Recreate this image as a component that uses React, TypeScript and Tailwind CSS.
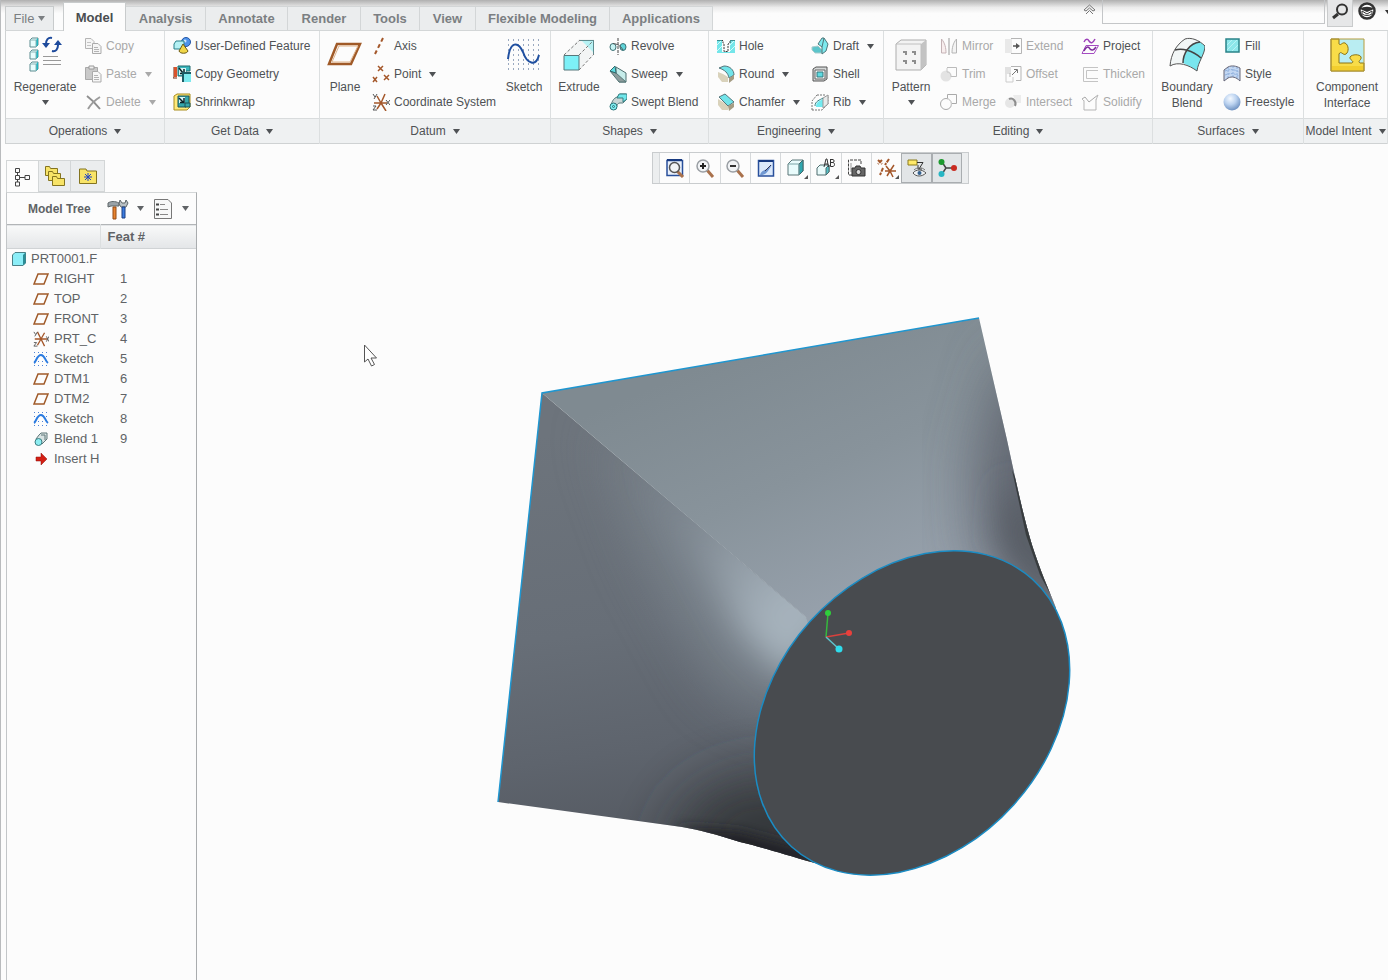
/**
 * Part modeling window: ribbon, model tree and graphics area.
 */

import type { ReactNode } from 'react';

type SvgProps = { children: ReactNode; size?: number; box?: number };

function Icon({ children, size = 18, box = size }: SvgProps) {
  return (
    <svg width={size} height={size} viewBox={`0 0 ${box} ${box}`} fill="none" className="block shrink-0" aria-hidden="true">
      {children}
    </svg>
  );
}

/* ---------- ribbon icons ---------- */

const CUBE = 'M1 3 L3 1 H9 V8 L7 10 H1 Z';

const icons = {
  regenerate: (
    <Icon size={36}>
      {[2, 14, 26].map((y) => (
        <g key={y} transform={`translate(2 ${y - 1})`}>
          <path d={CUBE} fill="#e8fdfd" stroke="#5d8c90" />
          <path d="M7 3 L9 1 V8 L7 10 Z" fill="#1fb5c0" />
          <path d="M1 3 H7 V10" stroke="#8ab4b6" />
        </g>
      ))}
      <path d="M25 2 C21 1 19 4 19 8" stroke="#1d4a9c" strokeWidth="2" />
      <path d="M15 7 H23 L19 12 Z" fill="#1d4a9c" />
      <path d="M25 15 C29 16 31 13 31 9" stroke="#1d4a9c" strokeWidth="2" />
      <path d="M27 9 H35 L31 4 Z" fill="#1d4a9c" />
      <path d="M16 20.5 H31 M16 24.5 H34 M16 28.5 H34" stroke="#999" />
    </Icon>
  ),
  copy: (
    <Icon>
      <path d="M1.5 1.5 H7 L10 4.5 V11.5 H1.5 Z" fill="#f5f5f5" stroke="#b4b4b4" />
      <path d="M3 5.5 H7 M3 8.5 H7" stroke="#c4c4c4" />
      <path d="M8.5 6.5 H14 L17 9.5 V16.5 H8.5 Z" fill="#f5f5f5" stroke="#ababab" />
      <path d="M10 10.5 H14 M10 12.5 H15 M10 14.5 H15" stroke="#b4b4b4" />
    </Icon>
  ),
  paste: (
    <Icon>
      <path d="M1.5 2.5 H13.5 V14.5 H1.5 Z" fill="#c9c9c9" stroke="#a9a9a9" />
      <path d="M5 1 H10 V4 H5 Z" fill="#eee" stroke="#999" />
      <path d="M8.5 6.5 H14 L17 9.5 V17 H8.5 Z" fill="#f7f7f7" stroke="#ababab" />
      <path d="M10 10.5 H14 M10 12.5 H15 M10 14.5 H15" stroke="#b4b4b4" />
    </Icon>
  ),
  del: (
    <Icon>
      <path d="M3 3 C7 6 12 11 16 16" stroke="#8f8f8f" strokeWidth="2" />
      <path d="M16 4 C11 7 7 11 4 16" stroke="#9c9c9c" strokeWidth="2" />
    </Icon>
  ),
  udf: (
    <Icon>
      <circle cx="13" cy="5" r="4.5" fill="#4f93ea" stroke="#2456a6" />
      <circle cx="12" cy="4" r="1.5" fill="#cfe4ff" />
      <path d="M1 7 L3 4 H11 V9 L8 12 H1 Z" fill="#b4f1f4" stroke="#2a7f88" />
      <path d="M10 7 L15 14 C14 17 7 17 6 14 Z" fill="#f0d648" stroke="#6d5a14" />
    </Icon>
  ),
  copyGeometry: (
    <Icon>
      <path d="M5 1 H17 V6 H13 V11 H5 Z" fill="#39b7bd" stroke="#206a6f" />
      <path d="M6 3 H13 V10 H6 Z" fill="#d6f6f6" />
      <path d="M1 2 H4 V12 H1 Z" fill="#d9532c" />
      <path d="M0 2 V13 H4" stroke="#702812" />
      <path d="M6 3 L10 8 M11 4 V8.5 H7" stroke="#0c2328" strokeWidth="1.5" />
      <path d="M11 8 H18 V17 H11 Z" fill="#7de9ee" />
      <path d="M10 17 V8 H18" stroke="#1c5c66" strokeWidth="2" />
    </Icon>
  ),
  shrinkwrap: (
    <Icon>
      <path d="M1 3 L4 1 H17 V14 L14 17 H1 Z" fill="#ffea7a" stroke="#a98d1e" />
      <path d="M5 3 H16 V12 H13 V14 H5 Z" fill="#35a6ab" stroke="#1c5458" />
      <path d="M6 4 H12 V10 H6 Z" fill="#d6f6f6" />
      <path d="M6 5 L10 9 M11 5 V9.500 H7" stroke="#0c2328" strokeWidth="1.5" />
      <path d="M12 10 H17 V14 H12 Z" fill="#35a6ab" stroke="#1c5458" />
    </Icon>
  ),
  plane: (
    <Icon size={36}>
      <path d="M10 8 H33 L24 28 H2 Z" stroke="#a05a28" strokeWidth="2.5" />
      <path d="M12 10 H31 L23 26 H5 Z" stroke="#e0b48c" />
    </Icon>
  ),
  axis: (
    <Icon>
      <path d="M11 1 L3 17" stroke="#a4572a" strokeWidth="2" strokeDasharray="4 3" />
    </Icon>
  ),
  point: (
    <Icon>
      <path d="M6 1 L11 6 M11 1 L6 6 M1 12 L5 17 M5 12 L1 17 M12 10 L17 15 M17 10 L12 15" stroke="#a4572a" strokeWidth="1.5" />
    </Icon>
  ),
  csys: (
    <Icon>
      <path d="M9 10 L5 3 M9 10 L13 1 M9 10 H2 M9 10 H15 M9 10 L5 16 M9 10 L14 18" stroke="#a4572a" strokeWidth="1.5" />
      <path d="M1 1 L3 4 M5 1 L2 6 M14 7 L18 12 M18 7 L14 12 M1 13 H4 L1 17 H5" stroke="#555" />
    </Icon>
  ),
  sketch: (
    <Icon size={36}>
      {[4, 9, 14, 19, 24, 28, 33].map((y) => (
        <path key={y} d={`M2 ${y} H34`} stroke="#9aa9c0" strokeDasharray="1 4" strokeWidth="2" />
      ))}
      <path d="M2 23 C4 5 12 5 17 16 C21 28 30 31 33 19" stroke="#1f4fa0" strokeWidth="2" />
    </Icon>
  ),
  extrude: (
    <Icon size={36}>
      <path d="M3 18 L18 3 H33 V17 L18 34 Z" fill="#f3f5f5" />
      <path d="M20 4 H33 V17 Z" fill="#b6f2f4" />
      <path d="M3 19 L19 4 M18 19 L33 4 M18 34 L33 18" stroke="#777" strokeDasharray="3 2" />
      <path d="M19 4.5 H32.5 V18" stroke="#5e8b8e" />
      <path d="M3 19.5 H18 V34 H3 Z" fill="#7df0f7" stroke="#56777a" />
    </Icon>
  ),
  revolve: (
    <Icon>
      <path d="M9 1 V18" stroke="#444" strokeDasharray="3 1" />
      <ellipse cx="4" cy="10" rx="3" ry="3.5" fill="#c6f3f3" stroke="#3c7074" />
      <ellipse cx="14" cy="10" rx="3" ry="3.5" fill="#5fd3d8" stroke="#3c7074" />
      <path d="M4 6.5 C8 7 11 8 14 13" stroke="#555" />
    </Icon>
  ),
  sweep: (
    <Icon>
      <path d="M7 2 L17 8 V17 H10 L7 8 Z" fill="#c6ecea" stroke="#4f6f70" />
      <path d="M1 6 L7 8 L17 17 H10 Z" fill="#8d9c9c" stroke="#577" />
      <path d="M1 6 L6 1 L7 8 Z" fill="#5fdde2" stroke="#326a6d" />
    </Icon>
  ),
  sweptBlend: (
    <Icon>
      <path d="M8 4 L11 1 H17 V7 L14 10 H11 C8 10 8 13 7 16 L2 12 C3 8 5 5 8 4 Z" fill="#c9d6d6" stroke="#5d7f80" />
      <path d="M10 1 H18 V6 L14 9 V5 H8 Z" fill="#70e6ea" stroke="#377e82" />
      <circle cx="4.5" cy="13.5" r="3.5" fill="#80eef2" stroke="#2a7277" />
      <circle cx="4.5" cy="13.5" r="1" stroke="#2a7277" />
    </Icon>
  ),
  hole: (
    <Icon>
      <path d="M0 3 H5 V15 H13 V3 H18 V16 H0 Z" fill="#74e6ea" />
      <path d="M0 8 L5 3 M0 14 L5 9 M13 8 L18 3 M13 14 L18 9" stroke="#d6fafa" />
      <path d="M4 3.5 H6 V6 L7 7 V14.5 H11 V7 L13 6 V3.5 H14" stroke="#333" strokeDasharray="2 1" />
      <path d="M0 3.5 H5 M13 3.5 H18" stroke="#3d8e91" />
    </Icon>
  ),
  round: (
    <Icon>
      <path d="M1 7 L6 9 L11 12 V17 L5 17 L1 12 Z" fill="#d9d2bb" />
      <path d="M2 3 L7 1 C13 1 17 5 17 10 L12 13 C11 8 8 5 2 3 Z" fill="#71e4ea" stroke="#55757a" />
      <path d="M12 13 L17 10 V14 L12 18 Z" fill="#a59c83" />
    </Icon>
  ),
  chamfer: (
    <Icon>
      <path d="M1 6 L6 9 L11 13 V17 L5 17 L1 12 Z" fill="#d9d2bb" />
      <path d="M2 4 L8 1 L17 9 L11 13 Z" fill="#71e4ea" stroke="#55757a" />
      <path d="M11 13 L17 10 V14 L12 18 Z" fill="#a59c83" />
    </Icon>
  ),
  draft: (
    <Icon>
      <path d="M1 10 L7 9 L11 13 V16 L4 16 L1 13 Z" fill="#5cc5cb" stroke="#a9cccd" />
      <path d="M7 7 L11 1 H13 L17 7 L15 14 L11 17 V10 Z" fill="#7de9ee" stroke="#4e767a" />
      <path d="M11 10 L13 1" stroke="#4e767a" />
    </Icon>
  ),
  shell: (
    <Icon>
      <path d="M2 4 L5 2 H16 V14 L13 16 H2 Z" fill="#d5d8d8" stroke="#555" />
      <path d="M4 5 H14 V14 H4 Z" fill="#f4f6f6" stroke="#666" />
      <path d="M6 7 H12 V12 H6 Z" fill="#5edbe2" stroke="#33787c" />
    </Icon>
  ),
  rib: (
    <Icon>
      <path d="M1 17 V8 L6 2 M6 2 H15 M1 17 H11 L17 11 V2" stroke="#777" strokeDasharray="2 1" />
      <path d="M5 14 C5 9 8 8 12 6 V14 H5 Z" fill="#72eaf0" />
      <path d="M12 5 L17 2 V11 L12 15 Z" fill="#e7eaea" stroke="#999" />
      <path d="M4 13 C4 8 9 7 12 5" stroke="#357f84" />
    </Icon>
  ),
  pattern: (
    <Icon size={36}>
      <path d="M3 8 L8 4 H33 V29 L28 34 H3 Z" fill="#f3f3f3" stroke="#adadad" />
      <path d="M28 8 L33 4 V29 L28 34 Z" fill="#c3c3c3" />
      <path d="M3 8 H28 V34" stroke="#c0c0c0" />
      {[[10, 15], [19, 15], [10, 24], [19, 24]].map(([x, y]) => (
        <path key={`${x}-${y}`} d={`M${x} ${y} h4 v4 h-2 v-2 h-2 Z`} fill="#8d8d8d" />
      ))}
    </Icon>
  ),
  mirror: (
    <Icon>
      <path d="M9 1 V18" stroke="#999" />
      <path d="M1.5 2 V16 H6 C6 11 5 6 1.5 2 Z" fill="#f8eeee" stroke="#c5b3b6" />
      <path d="M16.5 2 V16 H12 C12 11 13 6 16.5 2 Z" fill="#f3f3f3" stroke="#b5b5b5" />
    </Icon>
  ),
  trim: (
    <Icon>
      <circle cx="6" cy="11" r="5.5" fill="#e3e3e3" />
      <path d="M7 2.5 H16.5 V11.5 H11" stroke="#bbb" />
      <path d="M7 3 V7 C10 7 11 9 11 12" stroke="#c8c8c8" />
    </Icon>
  ),
  merge: (
    <Icon>
      <path d="M7.5 6 V1.5 H16.5 V10.5 H12" stroke="#aaa" />
      <circle cx="6" cy="11" r="5.5" stroke="#a9a9a9" />
      <path d="M7 6 C10 6 12 9 11 13" stroke="#ddd" />
    </Icon>
  ),
  extend: (
    <Icon>
      <path d="M1 2 H8 V16 H1 Z" fill="#e9e9e9" />
      <path d="M7 1.5 H17.5 V16.5 H7" stroke="#b5b5b5" />
      <path d="M9 9 H13" stroke="#555" strokeWidth="1.5" />
      <path d="M12 6 L16 9 L12 12 Z" fill="#555" />
    </Icon>
  ),
  offset: (
    <Icon>
      <path d="M1 2 H7 V9 H1 Z" fill="#e1e1e1" />
      <path d="M7 1.5 H17 V15.5 H12 M6 12 V8" stroke="#b5b5b5" />
      <path d="M2 9 V17 H9 V12" stroke="#ccc" />
      <path d="M8 10 L13 5 M10 4.5 H13.5 V8" stroke="#777" />
    </Icon>
  ),
  intersect: (
    <Icon>
      <circle cx="6" cy="10" r="5" fill="#e6e6e6" />
      <path d="M9 2 H17 V10 H12 Z" fill="#ececec" />
      <path d="M5 6 C9 4 13 9 11 13" stroke="#8d8d8d" strokeWidth="2" />
    </Icon>
  ),
  project: (
    <Icon>
      <path d="M3 5 C5 1 7 2 8 4 C10 7 12 6 14 2" stroke="#9c3fb8" strokeWidth="1.5" />
      <path d="M5 8.5 H17.5 L13 16.5 H1 Z" stroke="#a54cc2" />
      <path d="M3 14 C6 8 8 10 9 12 C11 14 13 13 15 10" stroke="#7c2a9b" strokeWidth="1.5" />
    </Icon>
  ),
  thicken: (
    <Icon>
      <path d="M17 2.5 H2.5 V16.5 H17 M17 5.5 H5.5 V13.5 H17" stroke="#c4c4c4" />
    </Icon>
  ),
  solidify: (
    <Icon>
      <path d="M3 7.5 V17 H15 V6.5" stroke="#b5b5b5" />
      <path d="M1 6 L4 4 L8 9 L13 5 L17 2" stroke="#a8a8a8" />
      <path d="M1 6 L3 8 M17 2 L15 7" stroke="#bbb" />
    </Icon>
  ),
  boundaryBlend: (
    <Icon size={36}>
      <path d="M1 30 C2 18 7 9 16 3 C22 1 30 4 36 10 C36 18 29 26 28 35 C20 29 9 25 1 30 Z" fill="#f2f6f6" />
      <path d="M19 14 C22 9 26 6 31 6 L36 10 C36 18 29 26 28 35 C24 32 19 29 14 27 C14 22 16 18 19 14 Z" fill="#79e6ee" />
      <path d="M1 30 C2 18 7 9 16 3 C22 1 30 4 36 10 C36 18 29 26 28 35 C20 29 9 25 1 30 Z" stroke="#555" />
      <path d="M6 14 C13 12 23 14 32 22 M31 6 C20 7 14 18 14 27" stroke="#444" strokeWidth="1.5" />
    </Icon>
  ),
  fill: (
    <Icon>
      <path d="M3 2 H16 V15 H3 Z" fill="#8ce6ea" stroke="#2a8288" strokeWidth="1.5" />
      <path d="M4 8 L9 3 M4 13 L14 3 M9 14 L15 8" stroke="#b8f3f5" />
    </Icon>
  ),
  style: (
    <Icon>
      <path d="M1 16 V5 L5 2 C9 0 13 1 17 3 V16 C13 12 9 11 5 13 Z" fill="#c3d7f2" />
      <path d="M5 2 V13 M10 1 V12 M14 2 V14 M2 6 C7 4 11 4 16 7 M2 10 C7 8 11 8 16 11" stroke="#8fb0dd" strokeDasharray="2 1" />
      <path d="M1 16 V5 L5 2 C9 0 13 1 17 3 V16 C13 12 9 11 5 13 Z" stroke="#667" />
    </Icon>
  ),
  freestyle: (
    <Icon>
      <defs>
        <radialGradient id="ball" cx="0.4" cy="0.3" r="0.7">
          <stop offset="0" stopColor="#f4f9ff" />
          <stop offset="0.5" stopColor="#bcd3f0" />
          <stop offset="1" stopColor="#6f92c2" />
        </radialGradient>
      </defs>
      <circle cx="9" cy="9" r="8.5" fill="url(#ball)" />
    </Icon>
  ),
  componentInterface: (
    <Icon size={36}>
      <path d="M2 3 H35 V35 H2 Z" fill="#b9edf2" />
      <path d="M2 3 H10 V8 C12 10 13 6 16 7 C20 9 20 16 17 18 C14 20 12 14 10 18 V27 H23 C26 25 20 24 21 21 C23 18 31 18 32 21 C33 24 28 25 31 27 H35 V35 H2 Z" fill="#f8dc48" stroke="#8c7414" />
      <path d="M3 30 H34 V35 H3 Z" fill="#efc51e" opacity="0.6" />
      <path d="M2 3 H35 V35 H2 Z" stroke="#b59c3c" />
    </Icon>
  ),
};

/* ---------- view toolbar icons ---------- */

const LENS = (
  <>
    <path d="M12 12 L18 19" stroke="#a9714c" strokeWidth="3" />
    <circle cx="8" cy="8" r="6" fill="#f2f4f6" stroke="#9a9fa4" strokeWidth="1.5" />
  </>
);

const viewIcons: { name: string; icon: ReactNode; pressed?: boolean; menu?: boolean }[] = [
  {
    name: 'Refit',
    icon: (
      <Icon size={20}>
        <path d="M2 2.5 H17.5 V17.5 H2 Z" fill="#e9f0fb" stroke="#284f9b" strokeWidth="1.5" />
        <path d="M2 2 H17" stroke="#183a80" strokeWidth="2" />
        <path d="M12 13 L18 19" stroke="#a9714c" strokeWidth="3" />
        <circle cx="9.5" cy="9.5" r="5" fill="#f2f4f6" stroke="#555" strokeWidth="1.5" />
      </Icon>
    ),
  },
  { name: 'Zoom In', icon: <Icon size={20}>{LENS}<path d="M5 8 H11 M8 5 V11" stroke="#222" strokeWidth="2" /></Icon> },
  { name: 'Zoom Out', icon: <Icon size={20}>{LENS}<path d="M5 8 H11" stroke="#333" strokeWidth="2" /></Icon> },
  {
    name: 'Repaint',
    icon: (
      <Icon size={20}>
        <path d="M2.5 2.5 H17.5 V18 H2.5 Z" fill="#dbe9fb" stroke="#284f9b" strokeWidth="1.5" />
        <path d="M3 3 H17" stroke="#183a80" strokeWidth="2" />
        <path d="M4 17 C5 13 9 12 11 11 L16 7 L12 13 C10 16 8 17 4 17 Z" fill="#7098d2" />
        <path d="M15 7 L9 13" stroke="#335" />
      </Icon>
    ),
  },
  {
    name: 'Display Style',
    menu: true,
    icon: (
      <Icon size={20}>
        <path d="M2 6 L6 2 H17 V13 L13 17 H2 Z" fill="#e9fcfc" stroke="#5a7779" />
        <path d="M13 6 L17 2 V13 L13 17 Z" fill="#2fa7af" stroke="#42686b" />
        <path d="M2 6 H13 V17" stroke="#7ba4a6" />
      </Icon>
    ),
  },
  {
    name: 'Saved Orientations',
    menu: true,
    icon: (
      <Icon size={20}>
        <path d="M1 10 L4 7 H13 V14 L10 17 H1 Z" fill="#e9fbfb" stroke="#4f6d6f" />
        <path d="M10 10 L13 7 V14 L10 17 Z" fill="#55c0c6" stroke="#4f6d6f" />
        <path d="M8 9 L10 1 H11 L12.5 9 M9 6 H12 M14.5 1 V8.5 H17 C19 8 19 5 17 4.5 H15 M15 1.5 H17 C18.5 2 18.5 4 17 4.5" stroke="#333" />
      </Icon>
    ),
  },
  {
    name: 'View Manager',
    icon: (
      <Icon size={20}>
        <path d="M6 17 H2.5 V2 H15 V7" stroke="#444" strokeDasharray="3 1" />
        <path d="M5 5 V14" stroke="#999" />
        <path d="M6 10 H9 L10 8 H14 L15 10 H19 V18 H6 Z" fill="#666" stroke="#333" />
        <circle cx="12.5" cy="14" r="2.5" fill="#ddd" stroke="#333" />
      </Icon>
    ),
  },
  {
    name: 'Datum Display Filters',
    menu: true,
    icon: (
      <Icon size={20}>
        <path d="M1 2 L5 6 M5 2 L1 6 M12 1 L8 7 M6 10 L3 17" stroke="#a4572a" strokeWidth="2" strokeDasharray="4 1" />
        <path d="M13 13 L9 8 M13 13 L17 7 M13 13 H8 M13 13 H19 M13 13 L10 18 M13 13 L16 19" stroke="#a4572a" strokeWidth="1.5" />
      </Icon>
    ),
  },
  {
    name: 'Annotation Display',
    pressed: true,
    icon: (
      <Icon size={20}>
        <path d="M1 2 H10 V7 H1 Z" fill="#ffe96a" stroke="#8b7a1c" />
        <path d="M10 4.5 H16 L12 11 M11 7 V11 H15" stroke="#333" />
        <path d="M6 15 C9 11 15 11 19 15 C15 19 9 19 6 15 Z" fill="#eef1f4" stroke="#555" />
        <circle cx="12.5" cy="15" r="2" fill="#35618e" />
        <path d="M7 12 C10 9 15 9 18 12" stroke="#777" />
      </Icon>
    ),
  },
  {
    name: 'Spin Center',
    pressed: true,
    icon: (
      <Icon size={20}>
        <path d="M5 4 L9 10 L5 16 M9 10 H16" stroke="#444" strokeWidth="1.5" />
        <circle cx="4.5" cy="4" r="3" fill="#1d9a2e" />
        <circle cx="4.5" cy="16" r="3" fill="#27b6c4" />
        <circle cx="17" cy="10" r="3" fill="#c92a20" />
      </Icon>
    ),
  },
];

/* ---------- tree icons ---------- */

const treeIcons: Record<string, ReactNode> = {
  part: (
    <Icon size={16}>
      <path d="M1.5 4 L4 1.5 H14.5 V12 L12 14.5 H1.5 Z" fill="#8ceef8" stroke="#4b8087" />
      <path d="M12 4 L14.5 1.5 V12 L12 14.5 Z" fill="#2b8d96" />
    </Icon>
  ),
  plane: (
    <Icon size={16}>
      <path d="M5 3 H15 L11 13 H1 Z" stroke="#a05a28" strokeWidth="1.5" />
    </Icon>
  ),
  csys: (
    <Icon size={16} box={18}>
      <path d="M9 9 L5 1 M9 9 L13 2 M9 9 H2 M9 9 H16 M9 9 L5 16 M9 9 L13 17" stroke="#a4572a" strokeWidth="1.5" />
      <path d="M1 1 L3 4 M5 1 L2 6 M15 6 L18 12 M18 6 L15 12 M1 13 H4 L1 17 H5" stroke="#555" />
    </Icon>
  ),
  sketch: (
    <Icon size={16}>
      <path d="M1 1.5 H16 M1 5.5 H4 M13 5.5 H16 M1 10.5 H16 M1 14.5 H16" stroke="#4f83d6" strokeDasharray="1 3" />
      <path d="M1 12 C3 11 4 4 8 4 C12 4 12 10 15 12" stroke="#2b7be0" strokeWidth="2" />
    </Icon>
  ),
  blend: (
    <Icon size={16}>
      <path d="M6 4 L8 2 H14 V8 L12 10 L9 13 L3 8 Z" fill="#d9e3e3" stroke="#5f7778" />
      <path d="M8 4 H12 V9" stroke="#5f7778" />
      <circle cx="5.5" cy="11" r="3.5" fill="#8eeef2" stroke="#3b7b80" />
    </Icon>
  ),
  insert: (
    <Icon size={16}>
      <path d="M3 6 H8 V2 L14 8 L8 14 V10 H3 Z" fill="#d41f14" stroke="#8e130c" strokeWidth="0.5" />
    </Icon>
  ),
};

const treeRows = [
  { icon: 'plane', name: 'RIGHT', feat: '1' },
  { icon: 'plane', name: 'TOP', feat: '2' },
  { icon: 'plane', name: 'FRONT', feat: '3' },
  { icon: 'csys', name: 'PRT_C', feat: '4' },
  { icon: 'sketch', name: 'Sketch', feat: '5' },
  { icon: 'plane', name: 'DTM1', feat: '6' },
  { icon: 'plane', name: 'DTM2', feat: '7' },
  { icon: 'sketch', name: 'Sketch', feat: '8' },
  { icon: 'blend', name: 'Blend 1', feat: '9' },
  { icon: 'insert', name: 'Insert H', feat: '' },
];

/* ---------- ribbon parts ---------- */

function Caret() {
  return (
    <svg width="7" height="5" viewBox="0 0 7 5" className="block shrink-0" aria-hidden="true">
      <path d="M0 0 H7 L3.5 5 Z" fill="currentColor" />
    </svg>
  );
}

type ToolProps = { icon: ReactNode; label: string; menu?: boolean; disabled?: boolean };

function Tool({ icon, label, menu, disabled }: ToolProps) {
  return (
    <button type="button" disabled={disabled} className="flex h-7 items-center gap-1 whitespace-nowrap disabled:text-[#a9a9a9]">
      {icon}
      <span>{label}</span>
      {menu && <span className="ml-1"><Caret /></span>}
    </button>
  );
}

function BigTool({ icon, lines, menu, className }: { icon: ReactNode; lines: string[]; menu?: boolean; className: string }) {
  return (
    <button type="button" className={`flex shrink-0 flex-col items-center self-start pt-1 ${className}`}>
      {icon}
      <span className="mt-[7px] flex flex-col whitespace-nowrap leading-4">
        {lines.map((line) => (
          <span key={line}>{line}</span>
        ))}
      </span>
      {menu && <span className="mt-[5px]"><Caret /></span>}
    </button>
  );
}

function Column({ children, className = '' }: { children: ReactNode; className?: string }) {
  return <div className={`flex shrink-0 flex-col items-start ${className}`}>{children}</div>;
}

function Group({ title, className, children }: { title: string; className: string; children: ReactNode }) {
  return (
    <section className={`flex flex-col border-r border-[#dcdfe0] ${className}`}>
      <div className="flex h-[87px] pt-px">{children}</div>
      <button type="button" className="flex h-[26px] items-center justify-center gap-[7px] whitespace-nowrap border-y border-t-[#d9dcdd] border-b-[#cfd2d3] bg-[#eff1f2]">
        {title}
        <Caret />
      </button>
    </section>
  );
}

function TabBar() {
  const tabs = [
    { name: 'Analysis', width: 'w-20' },
    { name: 'Annotate', width: 'w-[82px]' },
    { name: 'Render', width: 'w-[73px]' },
    { name: 'Tools', width: 'w-[59px]' },
    { name: 'View', width: 'w-14' },
    { name: 'Flexible Modeling', width: 'w-[134px]' },
    { name: 'Applications', width: 'w-[103px]' },
  ];
  return (
    <header className="flex h-[30px] items-end bg-linear-to-b from-[#b0b0b0] via-[#ececec] via-25% to-[#fcfcfc] to-45% pl-1">
      <nav className="flex items-end text-[13px] font-bold text-[#7b7f82]">
        <button type="button" className="flex h-6 w-[49px] items-center justify-center gap-1 border border-b-0 border-[#c8cbcc] bg-[#ebedee] font-normal">
          File
          <Caret />
        </button>
        <button type="button" className="relative -mb-px ml-[9px] h-[29px] w-[63px] border border-b-0 border-[#c8cbcc] bg-[#fcfcfc] pt-0.5 text-[#4a4d50]">
          Model
        </button>
        {tabs.map(({ name, width }) => (
          <button key={name} type="button" className={`h-6 border border-b-0 border-l-0 border-[#d3d6d7] bg-[#ebedee] ${width}`}>
            {name}
          </button>
        ))}
      </nav>
      <div className="ml-auto flex items-start self-start">
        <button type="button" aria-label="Minimize ribbon" className="mt-1 mr-1.5">
          <svg width="13" height="11" viewBox="0 0 13 11" fill="none" stroke="#777">
            <path d="M1 6 L6.5 1 L12 6 L10 7 L6.5 4 L3 7 Z M3 10 L6.5 6.5 L10 10" />
          </svg>
        </button>
        <input type="text" aria-label="Command search" className="h-6 w-[223px] border border-t-0 border-[#c4c6c8] bg-transparent px-1 outline-none" />
        <button type="button" aria-label="Search" className="ml-0.5 flex h-[27px] w-[26px] items-center justify-center border border-t-0 border-[#c9cbcc] bg-[#e6e7e8] pb-1">
          <svg width="18" height="18" viewBox="0 0 18 18" fill="none" stroke="#333">
            <circle cx="11" cy="7.5" r="5" strokeWidth="2" />
            <path d="M7 12 L2 16" strokeWidth="3" />
          </svg>
        </button>
        <button type="button" aria-label="Learning connector" className="mt-0.5 ml-1 flex items-center gap-2 text-[#333]">
          <svg width="20" height="20" viewBox="0 0 20 20" fill="none">
            <circle cx="10" cy="9" r="7.5" fill="#fff" stroke="#333" strokeWidth="2.5" />
            <path d="M3 7 C6 4 14 4 17 7 L10 10 Z" fill="#333" />
            <path d="M5 9 V12 C8 14 12 14 15 12 V9 L10 12 Z" stroke="#333" />
          </svg>
          <span className="w-[3px] overflow-hidden"><Caret /></span>
        </button>
      </div>
    </header>
  );
}

function Ribbon() {
  return (
    <div className="flex overflow-hidden border-l border-[#cfd2d3] text-xs text-[#4f5255]">
      <Group title="Operations" className="w-[159px] shrink-0">
        <BigTool icon={icons.regenerate} lines={['Regenerate']} menu className="ml-2 w-[62px]" />
        <Column className="ml-2">
          <Tool icon={icons.copy} label="Copy" disabled />
          <Tool icon={icons.paste} label="Paste" menu disabled />
          <Tool icon={icons.del} label="Delete" menu disabled />
        </Column>
      </Group>

      <Group title="Get Data" className="w-[155px] shrink-0">
        <Column className="ml-2">
          <Tool icon={icons.udf} label="User-Defined Feature" />
          <Tool icon={icons.copyGeometry} label="Copy Geometry" />
          <Tool icon={icons.shrinkwrap} label="Shrinkwrap" />
        </Column>
      </Group>

      <Group title="Datum" className="w-[231px] shrink-0">
        <BigTool icon={icons.plane} lines={['Plane']} className="w-[50px]" />
        <Column className="ml-0.5">
          <Tool icon={icons.axis} label="Axis" />
          <Tool icon={icons.point} label="Point" menu />
          <Tool icon={icons.csys} label="Coordinate System" />
        </Column>
        <BigTool icon={icons.sketch} lines={['Sketch']} className="mr-1 ml-auto w-11" />
      </Group>

      <Group title="Shapes" className="w-[158px] shrink-0">
        <BigTool icon={icons.extrude} lines={['Extrude']} className="w-14" />
        <Column className="ml-0.5">
          <Tool icon={icons.revolve} label="Revolve" />
          <Tool icon={icons.sweep} label="Sweep" menu />
          <Tool icon={icons.sweptBlend} label="Swept Blend" />
        </Column>
      </Group>

      <Group title="Engineering" className="w-[175px] shrink-0">
        <Column className="ml-2 w-[94px]">
          <Tool icon={icons.hole} label="Hole" />
          <Tool icon={icons.round} label="Round" menu />
          <Tool icon={icons.chamfer} label="Chamfer" menu />
        </Column>
        <Column>
          <Tool icon={icons.draft} label="Draft" menu />
          <Tool icon={icons.shell} label="Shell" />
          <Tool icon={icons.rib} label="Rib" menu />
        </Column>
      </Group>

      <Group title="Editing" className="w-[269px] shrink-0">
        <BigTool icon={icons.pattern} lines={['Pattern']} menu className="w-[54px]" />
        <Column className="ml-0.5 w-16">
          <Tool icon={icons.mirror} label="Mirror" disabled />
          <Tool icon={icons.trim} label="Trim" disabled />
          <Tool icon={icons.merge} label="Merge" disabled />
        </Column>
        <Column className="w-[77px]">
          <Tool icon={icons.extend} label="Extend" disabled />
          <Tool icon={icons.offset} label="Offset" disabled />
          <Tool icon={icons.intersect} label="Intersect" disabled />
        </Column>
        <Column>
          <Tool icon={icons.project} label="Project" />
          <Tool icon={icons.thicken} label="Thicken" disabled />
          <Tool icon={icons.solidify} label="Solidify" disabled />
        </Column>
      </Group>

      <Group title="Surfaces" className="w-[151px] shrink-0">
        <BigTool icon={icons.boundaryBlend} lines={['Boundary', 'Blend']} className="w-[68px]" />
        <Column className="ml-0.5">
          <Tool icon={icons.fill} label="Fill" />
          <Tool icon={icons.style} label="Style" />
          <Tool icon={icons.freestyle} label="Freestyle" />
        </Column>
      </Group>

      <Group title="Model Intent" className="min-w-[84px] flex-1">
        <BigTool icon={icons.componentInterface} lines={['Component', 'Interface']} className="ml-2 w-[70px]" />
      </Group>
    </div>
  );
}

/* ---------- model tree ---------- */

function ModelTree() {
  return (
    <aside className="flex w-[191px] shrink-0 flex-col pt-4 text-[13px] text-[#606366]">
      <div className="flex h-8">
        <button type="button" aria-label="Model Tree" className="flex w-8 items-center justify-center border-t border-l border-[#d3d6d7]">
          <Icon size={20}>
            <path d="M2.5 1.5 H6.5 V5.5 H2.5 Z M2.5 8.5 H6.5 V12.5 H2.5 Z M2.5 15 H6.5 V19 H2.5 Z M12 8.5 H16.5 V12.5 H12 Z M4.5 5.5 V8.5 M4.5 12.5 V15 M6.5 10.5 H12" stroke="#444" />
          </Icon>
        </button>
        <button type="button" aria-label="Folder Browser" className="flex w-[33px] items-center justify-center border border-[#d3d6d7] bg-[#ebedee]">
          <Icon size={22}>
            {[[1, 1], [4, 6], [8, 11]].map(([x, y]) => (
              <path key={x} d={`M${x}.5 ${y}.5 h4 l1 2 h7 v7 h-12 Z`} fill="#f7e367" stroke="#84741f" />
            ))}
          </Icon>
        </button>
        <button type="button" aria-label="Favorites" className="flex w-[34px] items-center justify-center border border-l-0 border-[#d3d6d7] bg-[#ebedee]">
          <Icon size={20}>
            <path d="M1.5 3 H8 L9 5 H18.5 V17.5 H1.5 Z" fill="#f8e468" stroke="#84741f" />
            <path d="M10 7 V15 M6 11 H14 M7 8 L13 14 M13 8 L7 14" stroke="#2346c4" />
          </Icon>
        </button>
      </div>

      <div className="flex flex-1 flex-col border border-b-0 border-t-[#d3d6d7] border-r-[#a9acae] border-l-[#c3c6c8]">
        <div className="flex h-[31px] items-center pl-[21px]">
          <h2 className="w-[79px] text-xs font-bold">Model Tree</h2>
          <button type="button" aria-label="Settings" className="flex items-center gap-2">
            <Icon size={22}>
              <path d="M1 5 C4 3 8 3 12 5 V8 H4 L1 9 Z" fill="#9aa3a8" stroke="#5e6669" />
              <path d="M6 9 H9 V21 H6 Z" fill="#e8832f" stroke="#934a14" />
              <path d="M13 2 L15 5 H18 L19 2 L21 5 L19 9 H14 L12 6 Z" fill="#b9c0c3" stroke="#5e6669" />
              <path d="M15 9 H18 V20 H15 Z" fill="#3b7ce0" stroke="#1c3f82" />
            </Icon>
            <Caret />
          </button>
          <button type="button" aria-label="Show" className="ml-2 flex items-center gap-2">
            <Icon size={22}>
              <path d="M2.5 1.5 H16 L19.5 5 V20.5 H2.5 Z" fill="#f7f8f8" stroke="#777" />
              <path d="M8 6.5 H13 M8 11.5 H16 M8 16.5 H16" stroke="#888" />
              <path d="M4 6.5 H7 M4 11.5 H7 M4 16.5 H7" stroke="#444" strokeWidth="2" />
            </Icon>
            <Caret />
          </button>
        </div>

        <table className="w-full table-fixed border-collapse text-left">
          <colgroup>
            <col className="w-[93px]" />
            <col />
          </colgroup>
          <thead>
            <tr className="h-6 border-y border-t-[#b2b5b7] border-b-[#d0d3d5] bg-linear-to-b from-[#f8f9f9] to-[#e4e6e8]">
              <th className="border-r border-[#dcdfe0] p-0" aria-label="Name" />
              <th className="p-0 pl-[7px] font-bold">Feat #</th>
            </tr>
          </thead>
          <tbody>
            <tr className="h-5">
              <td className="p-0 pl-1">
                <span className="flex h-5 items-center gap-1 whitespace-nowrap">
                  {treeIcons.part}
                  PRT0001.F
                </span>
              </td>
              <td />
            </tr>
            {treeRows.map(({ icon, name, feat }) => (
              <tr key={`${name}-${feat}`} className="h-5">
                <td className="p-0 pl-[26px]">
                  <span className="flex h-5 items-center gap-[5px] whitespace-nowrap">
                    {treeIcons[icon]}
                    {name}
                  </span>
                </td>
                <td className="p-0 pl-5">{feat}</td>
              </tr>
            ))}
          </tbody>
        </table>
      </div>
    </aside>
  );
}

/* ---------- graphics area ---------- */

function ViewToolbar() {
  return (
    <div className="flex justify-center pl-9">
      <div className="grid h-8 w-[317px] grid-cols-10 border border-[#c9ccce] bg-[#eceeef] px-1.5">
        {viewIcons.map(({ name, icon, pressed, menu }) => (
          <button
            key={name}
            type="button"
            aria-label={name}
            aria-pressed={pressed}
            className={`relative flex items-center justify-center ${pressed ? 'border border-[#a9adb0] bg-[#e2e5e7]' : 'border-l border-[#d6d9db] bg-[#fcfcfc]'}`}
          >
            {icon}
            {menu && (
              <svg width="4" height="4" viewBox="0 0 4 4" className="absolute right-0.5 bottom-1">
                <path d="M4 0 V4 H0 Z" fill="#555" />
              </svg>
            )}
          </button>
        ))}
      </div>
    </div>
  );
}

const TOP_FACE = 'M542 393 L979 318 L1007 440 C1014 472 1022 512 1032 545 C1040 570 1048 588 1056 608 L1000 700 L830 700 L806 617 Z';
const SIDE_FACE = 'M542 393 L806 617 L860 700 L860 872 L815 863 C780 853 765 848 740 842 C715 834 700 830 682 827 L498 802 Z';

function ModelView() {
  return (
    <svg viewBox="197 185 1191 795" className="block w-full" role="img" aria-label="Blended part, square to circle">
      <defs>
        <linearGradient id="top" gradientUnits="userSpaceOnUse" x1="740" y1="350" x2="850" y2="610">
          <stop offset="0" stopColor="#7f8a91" />
          <stop offset="0.5" stopColor="#88939b" />
          <stop offset="1" stopColor="#97a1ac" />
        </linearGradient>
        <linearGradient id="side" gradientUnits="userSpaceOnUse" x1="580" y1="430" x2="640" y2="830">
          <stop offset="0" stopColor="#6d747c" />
          <stop offset="0.5" stopColor="#676e77" />
          <stop offset="0.8" stopColor="#5e646d" />
          <stop offset="1" stopColor="#565b63" />
        </linearGradient>
        <linearGradient id="glow" gradientUnits="userSpaceOnUse" x1="600" y1="450" x2="770" y2="620">
          <stop offset="0" stopColor="#7b848d" stopOpacity="0" />
          <stop offset="0.5" stopColor="#848e97" stopOpacity="0.8" />
          <stop offset="1" stopColor="#a6b2bc" />
        </linearGradient>
        <filter id="soft6" x="-50%" y="-50%" width="200%" height="200%"><feGaussianBlur stdDeviation="6" /></filter>
        <filter id="soft16" x="-50%" y="-50%" width="200%" height="200%"><feGaussianBlur stdDeviation="16" /></filter>
        <filter id="soft28" x="-50%" y="-50%" width="200%" height="200%"><feGaussianBlur stdDeviation="28" /></filter>
        <clipPath id="topClip"><path d={TOP_FACE} /></clipPath>
        <clipPath id="sideClip"><path d={SIDE_FACE} /></clipPath>
      </defs>

      <path d={SIDE_FACE} fill="url(#side)" />
      <g clipPath="url(#sideClip)">
        <path d="M600 420 L850 600 L790 720 L720 690 L650 560 Z" fill="#828c95" opacity="0.7" filter="url(#soft28)" />
        <path d="M640 455 L850 600 L790 680 L740 630 Z" fill="url(#glow)" filter="url(#soft16)" />
        <path d="M660 860 L700 795 L760 775 L860 790 L860 900 Z" fill="#36393b" filter="url(#soft28)" />
        <path d="M672 826 L740 832 L800 848 L840 872 L740 850 Z" fill="#222426" filter="url(#soft6)" />
      </g>

      <path d={TOP_FACE} fill="url(#top)" />
      <g clipPath="url(#topClip)">
        <path d="M1010 340 L975 460 L980 560 L1080 640 L1070 420 Z" fill="#5b616a" opacity="0.9" filter="url(#soft28)" />
        <path d="M1008 480 L1002 540 L1040 600 L1070 610 L1040 520 Z" fill="#565b63" filter="url(#soft16)" />
        <path d="M1012 470 L1026 535 L1040 575 L1060 612 L1060 580 Z" fill="#383c3e" />
      </g>

      <ellipse cx="912" cy="713" rx="180" ry="137" transform="rotate(-48 912 713)" fill="#484b4f" stroke="#1b8cc4" strokeWidth="1.5" />
      <path d="M979 318 L542 393 L498 802" fill="none" stroke="#1f96d0" strokeWidth="1.5" />

      {/* Spin center */}
      <path d="M826 637 L828 613" stroke="#35b83d" strokeWidth="1.5" />
      <path d="M826 637 L849 633" stroke="#d9413d" strokeWidth="1.5" />
      <path d="M826 637 L839 649" stroke="#5fc3cc" strokeWidth="1.5" />
      <circle cx="828" cy="613" r="3" fill="#2fcf3b" />
      <circle cx="849" cy="633" r="3" fill="#e8403c" />
      <circle cx="839" cy="649" r="3.5" fill="#2fdcec" />

      {/* Pointer */}
      <path d="M364.5 345 V362 L368 359 L371.5 366 L374.5 364.5 L371 358 H376.5 Z" fill="#fff" stroke="#555" />
    </svg>
  );
}

export default function App() {
  return (
    <div className="flex min-h-screen flex-col overflow-hidden border-l border-[#b9bbbd] bg-[#fcfcfc] font-['Liberation_Sans',Arial,sans-serif]">
      <TabBar />
      <div className="pl-1">
        <div className="border-t border-[#d3d6d7]">
          <Ribbon />
        </div>
      </div>
      <div className="flex flex-1 pl-[5px]">
        <ModelTree />
        <main className="flex min-w-0 flex-1 flex-col gap-px pt-2">
          <ViewToolbar />
          <ModelView />
        </main>
      </div>
    </div>
  );
}
